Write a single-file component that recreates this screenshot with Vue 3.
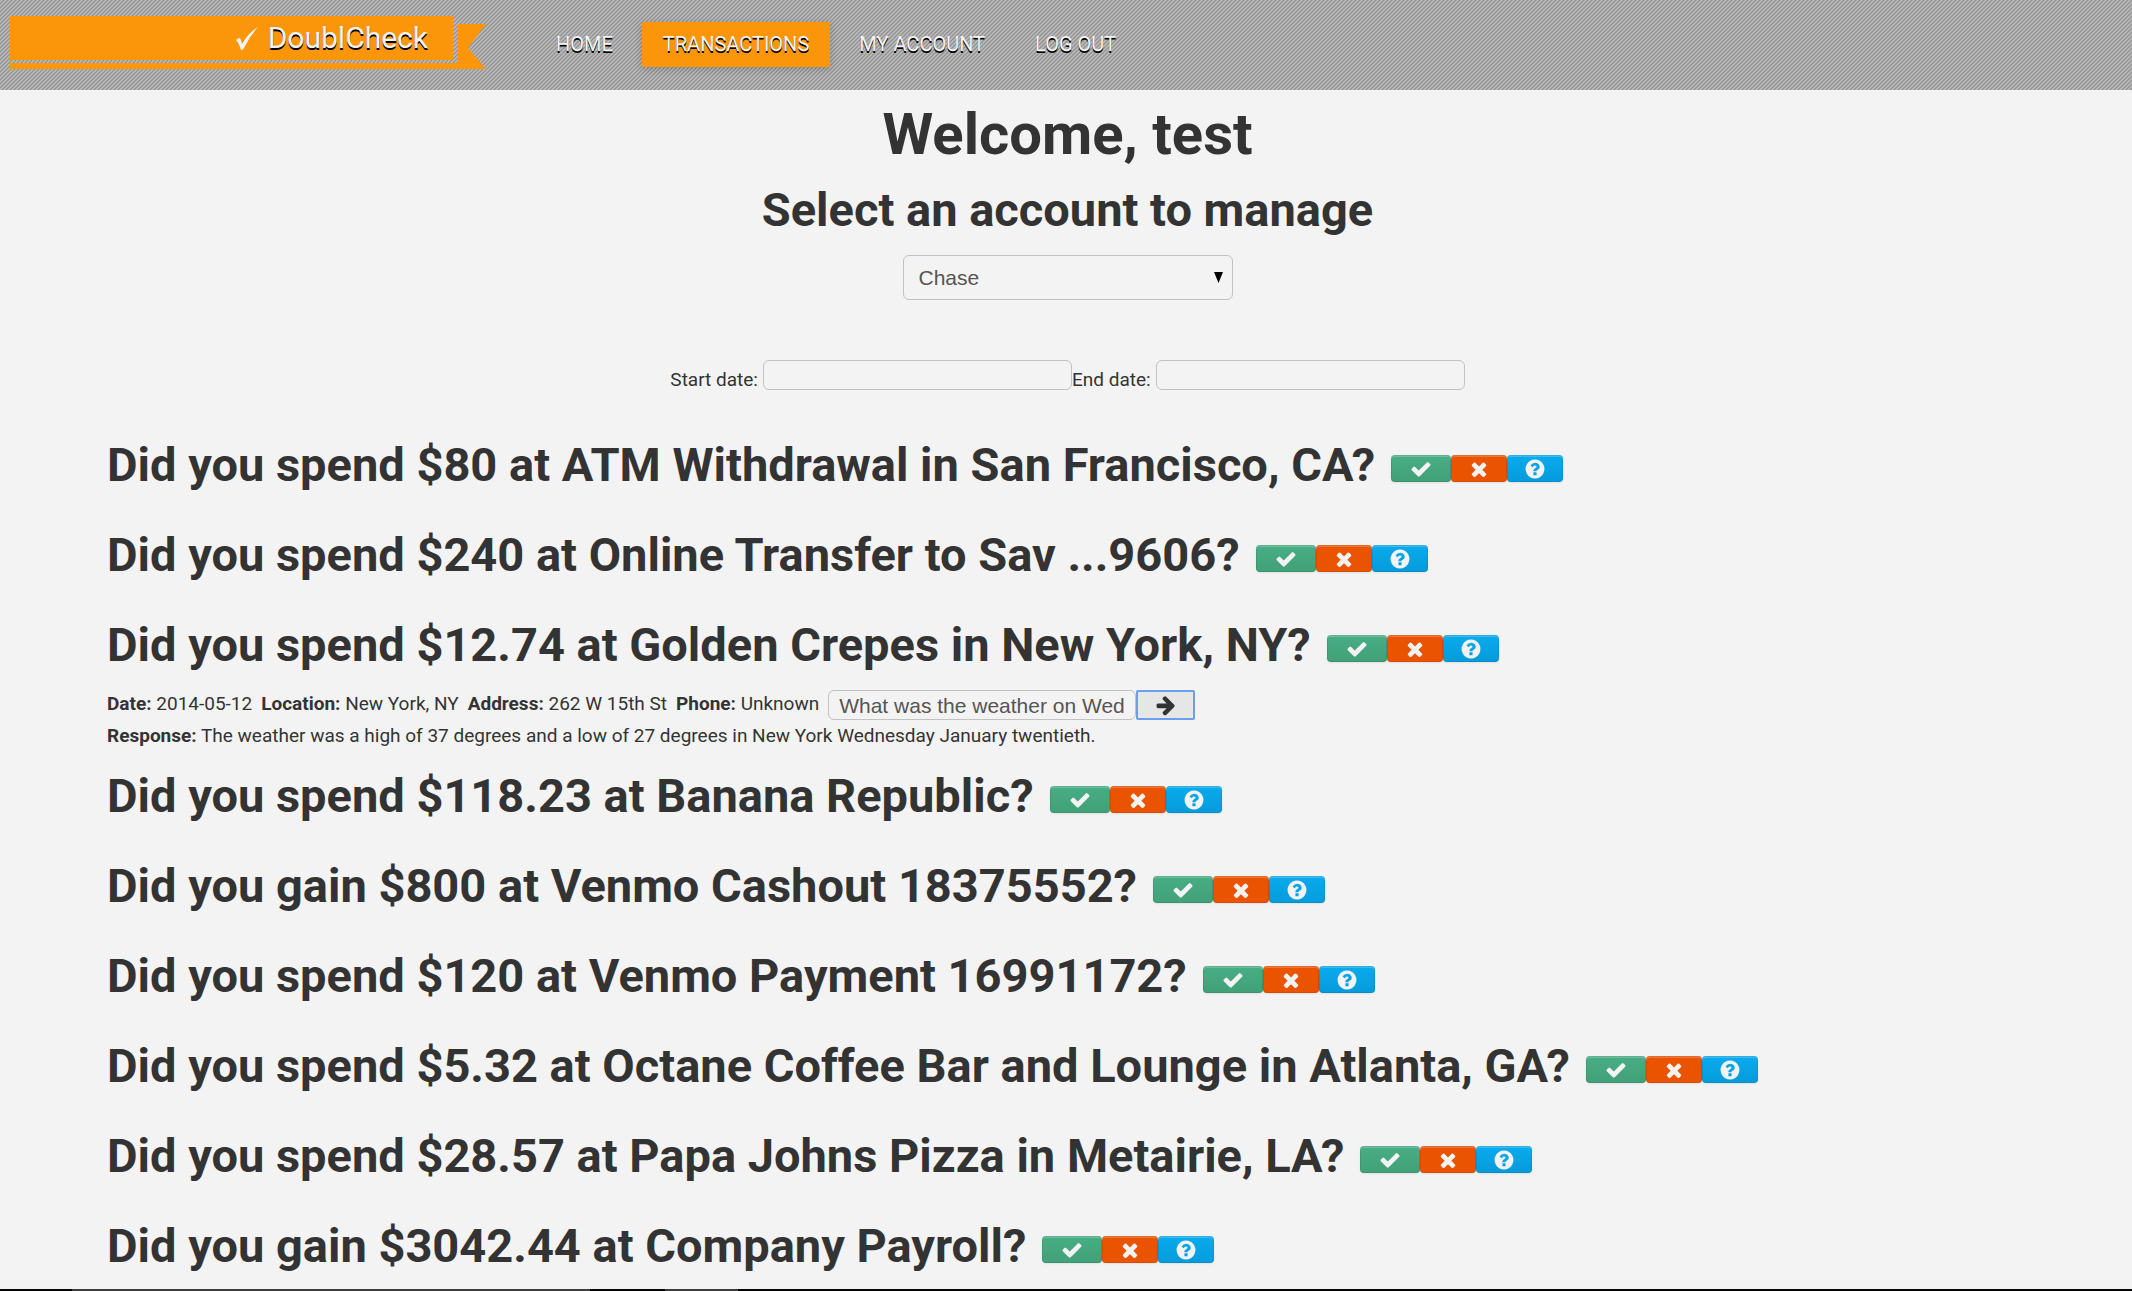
<script setup>
import { ref } from 'vue'

const links = ['Home', 'Transactions', 'My account', 'Log out']
const active = 'Transactions'
const account = ref('Chase')
const startDate = ref('')
const endDate = ref('')
const question = ref('What was the weather on Wednesday January twentieth')

const transactions = [
  { verb: 'spend', amount: '80', place: 'ATM Withdrawal in San Francisco, CA' },
  { verb: 'spend', amount: '240', place: 'Online Transfer to Sav ...9606' },
  {
    verb: 'spend', amount: '12.74', place: 'Golden Crepes in New York, NY',
    details: [
      ['Date', '2014-05-12'],
      ['Location', 'New York, NY'],
      ['Address', '262 W 15th St'],
      ['Phone', 'Unknown'],
    ],
    response: 'The weather was a high of 37 degrees and a low of 27 degrees in New York Wednesday January twentieth.',
  },
  { verb: 'spend', amount: '118.23', place: 'Banana Republic' },
  { verb: 'gain', amount: '800', place: 'Venmo Cashout 18375552' },
  { verb: 'spend', amount: '120', place: 'Venmo Payment 16991172' },
  { verb: 'spend', amount: '5.32', place: 'Octane Coffee Bar and Lounge in Atlanta, GA' },
  { verb: 'spend', amount: '28.57', place: 'Papa Johns Pizza in Metairie, LA' },
  { verb: 'gain', amount: '3042.44', place: 'Company Payroll' },
]

const actions = [
  {
    name: 'yes', label: 'Yes',
    path: 'M1671 566q0 40-28 68l-724 724-136 136q-28 28-68 28t-68-28l-136-136-362-362q-28-28-28-68t28-68l136-136q28-28 68-28t68 28l294 295 656-657q28-28 68-28t68 28l136 136q28 28 28 68z',
  },
  {
    name: 'no', label: 'No',
    path: 'M1490 1322q0 40-28 68l-136 136q-28 28-68 28t-68-28l-294-294-294 294q-28 28-68 28t-68-28l-136-136q-28-28-28-68t28-68l294-294-294-294q-28-28-28-68t28-68l136-136q28-28 68-28t68 28l294 294 294-294q28-28 68-28t68 28l136 136q28 28 28 68t-28 68l-294 294 294 294q28 28 28 68z',
  },
  {
    name: 'ask', label: 'Ask',
    path: 'M1024 1376v-192q0-14-9-23t-23-9h-192q-14 0-23 9t-9 23v192q0 14 9 23t23 9h192q14 0 23-9t9-23zm256-672q0-88-55.5-163t-138.500-116-170.500-41q-243 0-371 213-15 24 8 42l132 100q7 6 19 6 16 0 25-12 53-68 86-92 34-24 86-24 48 0 85.500 26t37.500 59q0 38-20 61t-68 45q-63 28-115.500 86.500t-52.500 125.500v36q0 14 9 23t23 9h192q14 0 23-9t9-23q0-19 21.500-49.500t54.500-49.500q32-18 49-28.500t46-35 44.500-48 28-60.500 12.500-81zm384 192q0 209-103 385.500t-279.500 279.500-385.500 103-385.500-103-279.500-279.500-103-385.500 103-385.500 279.500-279.500 385.500-103 385.500 103 279.500 279.500 103 385.500z',
  },
]
</script>

<template>
  <div class="page">
    <header class="bar">
      <a class="brand" href="#">
        <svg class="brand-check" viewBox="0 0 24 26" aria-hidden="true">
          <path d="M1 15q2-2 4-2 1 2 2 6Q14 7 23 2q-8 9-14 21-1 2-3 2Q4 18 1 15z" />
        </svg>
        <span>DoublCheck</span>
      </a>
      <nav class="nav">
        <a v-for="link in links" :key="link" href="#" :class="{ active: link === active }">{{ link }}</a>
      </nav>
    </header>

    <main>
      <section class="intro">
        <h1>Welcome, test</h1>
        <h2><label for="account">Select an account to manage</label></h2>
        <div class="select-wrap">
          <select id="account" v-model="account">
            <option>Chase</option>
          </select>
          <svg class="caret" viewBox="0 0 9 11" aria-hidden="true"><path d="M0 0h9L4.500 11z" /></svg>
        </div>
        <div class="dates">
          <label for="start">Start date:</label>
          <input id="start" v-model="startDate" type="text">
          <label for="end">End date:</label>
          <input id="end" v-model="endDate" type="text">
        </div>
      </section>

      <section class="list">
        <article v-for="item in transactions" :key="item.place">
          <div class="row">
            <h2>Did you {{ item.verb }} ${{ item.amount }} at {{ item.place }}?</h2>
            <div class="actions">
              <button v-for="action in actions" :key="action.name" type="button" :class="action.name" :aria-label="action.label">
                <svg class="icon" viewBox="0 0 1792 1792" aria-hidden="true"><path :d="action.path" /></svg>
              </button>
            </div>
          </div>
          <div v-if="item.details" class="details">
            <form class="facts" @submit.prevent>
              <span v-for="[name, value] in item.details" :key="name"><b>{{ name }}:</b> {{ value }}</span>
              <div class="ask-group">
                <input v-model="question" type="text" aria-label="Question">
                <button type="submit" aria-label="Send question">
                  <svg class="icon" viewBox="0 0 1792 1792" aria-hidden="true"><path d="M1600 960q0 54-37 91l-651 651q-39 37-91 37-51 0-90-37l-75-75q-38-38-38-91t38-91l293-293h-704q-52 0-84.500-37.500t-32.500-90.500v-128q0-53 32.500-90.500t84.500-37.500h704l-293-294q-38-36-38-90t38-90l75-75q38-38 90-38 53 0 91 38l651 651q37 35 37 90z" /></svg>
                </button>
              </div>
            </form>
            <p><b>Response:</b> {{ item.response }}</p>
          </div>
        </article>
      </section>
    </main>

    <footer class="strip"></footer>
  </div>
</template>

<style>
body {
  margin: 0;
  background: #f3f3f3;
}
</style>

<style scoped>
.page {
  display: flex;
  flex-direction: column;
  min-height: 100vh;
  color: #333;
  font: 19px/32px Roboto, sans-serif;
}

*,
*::after {
  box-sizing: border-box;
}

h1,
h2,
p {
  margin: 0;
}

.bar {
  display: flex;
  align-items: flex-start;
  height: 90px;
  background-color: #a8a8a8;
  background-image: url("data:image/svg+xml,%3Csvg xmlns='http://www.w3.org/2000/svg' width='4' height='4' shape-rendering='crispEdges'%3E%3Cpath fill='%23aaa' d='M0 0h4v4H0z'/%3E%3Cpath fill='%23909090' d='M3 0h1v1H3zM2 1h1v1H2zM1 2h1v1H1zM0 3h1v1H0z'/%3E%3Cpath fill='%23bcbcbc' d='M1 0h1v1H1zM0 1h1v1H0zM3 2h1v1H3zM2 3h1v1H2z'/%3E%3C/svg%3E");
}

.brand {
  position: relative;
  display: flex;
  align-items: center;
  justify-content: flex-end;
  gap: 9px;
  width: 443px;
  height: 44px;
  margin: 16px 0 0 10px;
  padding-right: 25px;
  background: #fb9509;
  color: #f3f3f3;
  font-size: 30px;
  text-decoration: none;
  text-shadow: 0 2px 0 #000;
}

/* ribbon fold and swallow tail */
.brand::after {
  content: "";
  position: absolute;
  top: 8px;
  left: 0;
  right: -33px;
  height: 45px;
  background: #fb9509;
  clip-path: polygon(0 39px, calc(100% - 28px) 39px, calc(100% - 28px) 0, 100% 0, calc(100% - 18px) 24px, 100% 100%, 0 100%);
}

.brand-check {
  width: 24px;
  height: 26px;
  fill: #f3f3f3;
}

.nav {
  display: flex;
  gap: 8px;
  margin: 22px 0 0 82px;
}

.nav a {
  padding: 0 21px;
  color: #f3f3f3;
  font-size: 20px;
  line-height: 45px;
  text-decoration: none;
  text-shadow: 0 2px 0 #000;
  text-transform: uppercase;
}

.nav .active {
  background: #fb9509;
  box-shadow: 0 2px 8px rgba(0, 0, 0, 0.2);
}

.intro {
  display: flex;
  flex-direction: column;
  align-items: center;
  padding: 13px 0 0 3px;
}

h1 {
  font-size: 58px;
  line-height: 62px;
}

h2 {
  font-size: 47px;
  line-height: 90px;
}

input,
select {
  border: 1px solid #c2c2c2;
  border-radius: 6px;
  background: #f3f3f3;
  color: #555;
  font: 21px/24px "Liberation Sans", sans-serif;
}

.select-wrap {
  position: relative;
  width: 330px;
}

select {
  display: block;
  width: 100%;
  height: 45px;
  padding: 0 15px;
  appearance: none;
}

.caret {
  position: absolute;
  top: 17px;
  right: 10px;
  width: 9px;
  height: 11px;
  pointer-events: none;
}

.dates {
  display: flex;
  align-items: flex-start;
  margin-top: 60px;
}

.dates label {
  padding-top: 4px;
}

.dates input {
  width: 309px;
  height: 30px;
  margin-left: 5px;
}

.list {
  margin: 24px 0 -4px;
  padding: 0 107px;
}

.row {
  display: flex;
  gap: 16px;
}

.actions {
  display: flex;
  margin-top: 35px;
}

button {
  display: flex;
  align-items: center;
  justify-content: center;
  padding: 0;
  border: 0;
}

.actions button {
  width: 56px;
  height: 27px;
  border-radius: 4px;
  box-shadow: inset 0 0 0 1px rgba(0, 0, 0, 0.08), inset 0 2px 0 rgba(255, 255, 255, 0.2), 0 1px 2px rgba(0, 0, 0, 0.08);
}

.actions .yes {
  width: 60px;
  background: linear-gradient(#48ae85, #41a078);
}

.actions .no {
  background: #ea5300;
}

.actions .ask {
  background: linear-gradient(#09abee, #059bda);
}

.icon {
  width: 22px;
  height: 22px;
  fill: #f3f3f3;
}

.facts {
  display: flex;
  gap: 9px;
  height: 30px;
  line-height: 28px;
}

.details p {
  line-height: 31px;
}

.ask-group {
  display: flex;
}

.ask-group input {
  width: 308px;
  height: 30px;
  padding: 2px 10px 0;
}

.ask-group button {
  width: 59px;
  height: 30px;
  border: 2px solid #6a9ff0;
  border-radius: 2px;
  background: #e6e6e6;
}

.ask-group .icon {
  fill: #333;
}

.strip {
  height: 2px;
  margin-top: auto;
  background: linear-gradient(90deg, #050505 72px, #3c3c3c 72px 590px, #050505 590px 665px, #3c3c3c 665px 738px, #050505 738px);
}
</style>
